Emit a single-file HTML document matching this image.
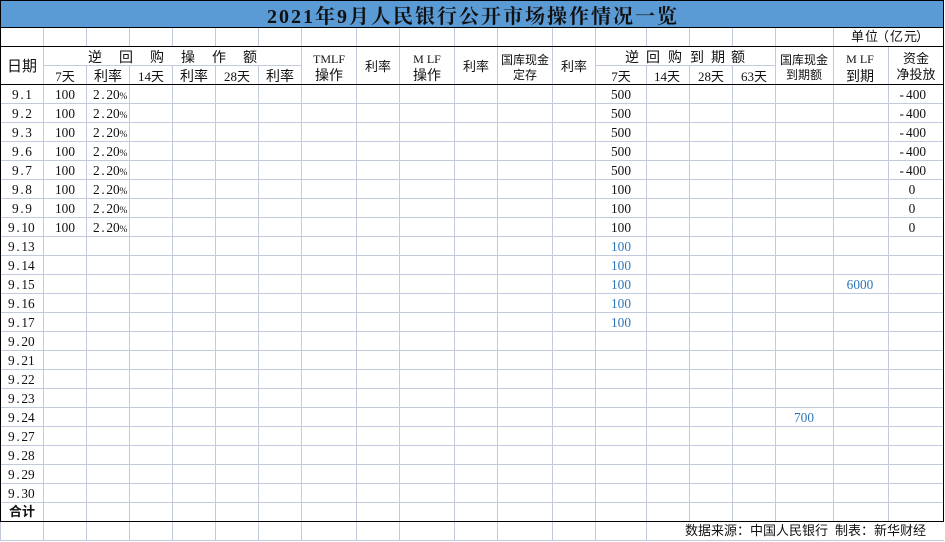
<!DOCTYPE html>
<html><head><meta charset="utf-8"><style>
html,body{margin:0;padding:0;background:#fff;width:945px;height:542px;overflow:hidden}
svg{display:block}
text{font-family:"Liberation Serif","WenQuanYi Zen Hei","Noto Sans CJK SC",sans-serif;font-size:13px;fill:#111;text-anchor:middle}
.h{font-size:14px}
.s{font-size:12px}
.t{font-family:"Liberation Serif","Noto Serif CJK SC",serif;font-size:20px;font-weight:bold;letter-spacing:2px}
.b{fill:#2e75b6}
.l{text-anchor:start}
.n{font-size:13.33px}
.p{font-size:9.5px}
</style></head><body>
<svg width="945" height="542" viewBox="0 0 945 542" xmlns="http://www.w3.org/2000/svg" shape-rendering="crispEdges">
<rect width="945" height="542" fill="#fff"/>
<rect x="0" y="0" width="944" height="28" fill="#5b9bd5"/>
<g stroke="#c4cadd" stroke-width="1" fill="none">
<path d="M43.5 28V540M86.5 65V540M129.5 65V540M172.5 65V540M215.5 65V540M258.5 65V540M301.5 28V540M356.5 28V540M399.5 28V540M454.5 28V540M497.5 28V540M552.5 28V540M595.5 28V540M646.5 65V540"/>
<path d="M86.5 28V46M129.5 28V46M172.5 28V46M215.5 28V46M258.5 28V46M646.5 28V46"/>
<path d="M689.5 28V46M732.5 28V46M775.5 28V46M833.5 28V46"/>
<path d="M689.5 65V521M732.5 65V521M775.5 46V521M833.5 46V521M888.5 46V521"/>
<path d="M43 65.5H301M595 65.5H775"/>
<path d="M0 103.5H943M0 122.5H943M0 141.5H943M0 160.5H943M0 179.5H943M0 198.5H943M0 217.5H943M0 236.5H943M0 255.5H943M0 274.5H943M0 293.5H943M0 312.5H943M0 331.5H943M0 350.5H943M0 369.5H943M0 388.5H943M0 407.5H943M0 426.5H943M0 445.5H943M0 464.5H943M0 483.5H943M0 502.5H943"/>
<path d="M0 540.5H944M0.5 521V540"/>
</g>
<g stroke="#000" stroke-width="1" fill="none">
<path d="M0 0.5H944M0 27.5H944M0 46.5H944M0 84.5H944M0 521.5H944M0.5 0V521M943.5 0V521"/>
</g>

<text class="t" x="473" y="23">2021年9月人民银行公开市场操作情况一览</text>
<text class="l" x="851 865 876 890 904 916" y="41">单位（亿元）</text>

<text class="h" x="22" y="71" style="font-size:15px">日期</text>
<text class="h" x="95" y="62">逆</text><text class="h" x="126" y="62">回</text><text class="h" x="157" y="62">购</text><text class="h" x="188" y="62">操</text><text class="h" x="219" y="62">作</text><text class="h" x="250" y="62">额</text>
<text x="65" y="81">7天</text><text x="108" y="81" class="h">利率</text><text x="151" y="81">14天</text><text x="194" y="81" class="h">利率</text><text x="237" y="81">28天</text><text x="280" y="81" class="h">利率</text>
<text class="s" x="329" y="63">TMLF</text><text class="h" x="329" y="80">操作</text>
<text x="378" y="71">利率</text>
<text class="s" x="427" y="63">M LF</text><text class="h" x="427" y="80">操作</text>
<text x="476" y="71">利率</text>
<text class="s" x="525" y="64">国库现金</text><text class="s" x="525" y="79">定存</text>
<text x="574" y="71">利率</text>
<text class="h" x="632" y="62">逆</text><text class="h" x="653" y="62">回</text><text class="h" x="675" y="62">购</text><text class="h" x="697" y="62">到</text><text class="h" x="718" y="62">期</text><text class="h" x="738" y="62">额</text>
<text x="621" y="81">7天</text><text x="667" y="81">14天</text><text x="711" y="81">28天</text><text x="754" y="81">63天</text>
<text class="s" x="804" y="64">国库现金</text><text class="s" x="804" y="79">到期额</text>
<text class="s" x="860" y="63">M LF</text><text class="h" x="860" y="81">到期</text>
<text x="916" y="63">资金</text><text x="916" y="79">净投放</text>

<g class="dates">
<text class="n l" x="12 20.4 25.3" y="99">9.1</text>
<text class="n l" x="12 20.4 25.3" y="118">9.2</text>
<text class="n l" x="12 20.4 25.3" y="137">9.3</text>
<text class="n l" x="12 20.4 25.3" y="156">9.6</text>
<text class="n l" x="12 20.4 25.3" y="175">9.7</text>
<text class="n l" x="12 20.4 25.3" y="194">9.8</text>
<text class="n l" x="12 20.4 25.3" y="213">9.9</text>
<text class="n l" x="8 16.4 21.4 28" y="232">9.10</text>
<text class="n l" x="8 16.4 21.4 28" y="251">9.13</text>
<text class="n l" x="8 16.4 21.4 28" y="270">9.14</text>
<text class="n l" x="8 16.4 21.4 28" y="289">9.15</text>
<text class="n l" x="8 16.4 21.4 28" y="308">9.16</text>
<text class="n l" x="8 16.4 21.4 28" y="327">9.17</text>
<text class="n l" x="8 16.4 21.4 28" y="346">9.20</text>
<text class="n l" x="8 16.4 21.4 28" y="365">9.21</text>
<text class="n l" x="8 16.4 21.4 28" y="384">9.22</text>
<text class="n l" x="8 16.4 21.4 28" y="403">9.23</text>
<text class="n l" x="8 16.4 21.4 28" y="422">9.24</text>
<text class="n l" x="8 16.4 21.4 28" y="441">9.27</text>
<text class="n l" x="8 16.4 21.4 28" y="460">9.28</text>
<text class="n l" x="8 16.4 21.4 28" y="479">9.29</text>
<text class="n l" x="8 16.4 21.4 28" y="498">9.30</text>
</g>
<text x="22" y="516" style="font-weight:bold">合计</text>

<text class="n" x="65" y="99">100</text><text class="n l" x="93 101.4 106.4 113" y="99">2.20<tspan class="p" x="119.5">%</tspan></text><text class="n" x="621" y="99">500</text><text class="n l" x="899.5 906 912.7 919.4" y="99">-400</text>
<text class="n" x="65" y="118">100</text><text class="n l" x="93 101.4 106.4 113" y="118">2.20<tspan class="p" x="119.5">%</tspan></text><text class="n" x="621" y="118">500</text><text class="n l" x="899.5 906 912.7 919.4" y="118">-400</text>
<text class="n" x="65" y="137">100</text><text class="n l" x="93 101.4 106.4 113" y="137">2.20<tspan class="p" x="119.5">%</tspan></text><text class="n" x="621" y="137">500</text><text class="n l" x="899.5 906 912.7 919.4" y="137">-400</text>
<text class="n" x="65" y="156">100</text><text class="n l" x="93 101.4 106.4 113" y="156">2.20<tspan class="p" x="119.5">%</tspan></text><text class="n" x="621" y="156">500</text><text class="n l" x="899.5 906 912.7 919.4" y="156">-400</text>
<text class="n" x="65" y="175">100</text><text class="n l" x="93 101.4 106.4 113" y="175">2.20<tspan class="p" x="119.5">%</tspan></text><text class="n" x="621" y="175">500</text><text class="n l" x="899.5 906 912.7 919.4" y="175">-400</text>
<text class="n" x="65" y="194">100</text><text class="n l" x="93 101.4 106.4 113" y="194">2.20<tspan class="p" x="119.5">%</tspan></text><text class="n" x="621" y="194">100</text><text class="n" x="912" y="194">0</text>
<text class="n" x="65" y="213">100</text><text class="n l" x="93 101.4 106.4 113" y="213">2.20<tspan class="p" x="119.5">%</tspan></text><text class="n" x="621" y="213">100</text><text class="n" x="912" y="213">0</text>
<text class="n" x="65" y="232">100</text><text class="n l" x="93 101.4 106.4 113" y="232">2.20<tspan class="p" x="119.5">%</tspan></text><text class="n" x="621" y="232">100</text><text class="n" x="912" y="232">0</text>
<text class="n b" x="621" y="251">100</text>
<text class="n b" x="621" y="270">100</text>
<text class="n b" x="621" y="289">100</text>
<text class="n b" x="860" y="289">6000</text>
<text class="n b" x="621" y="308">100</text>
<text class="n b" x="621" y="327">100</text>
<text class="n b" x="804" y="422">700</text>

<text class="l" x="685" y="535">数据来源：</text>
<text class="l" x="750" y="535">中国人民银行</text>
<text class="l" x="835" y="535">制表：</text>
<text class="l" x="874" y="535">新华财经</text>
</svg>
</body></html>
